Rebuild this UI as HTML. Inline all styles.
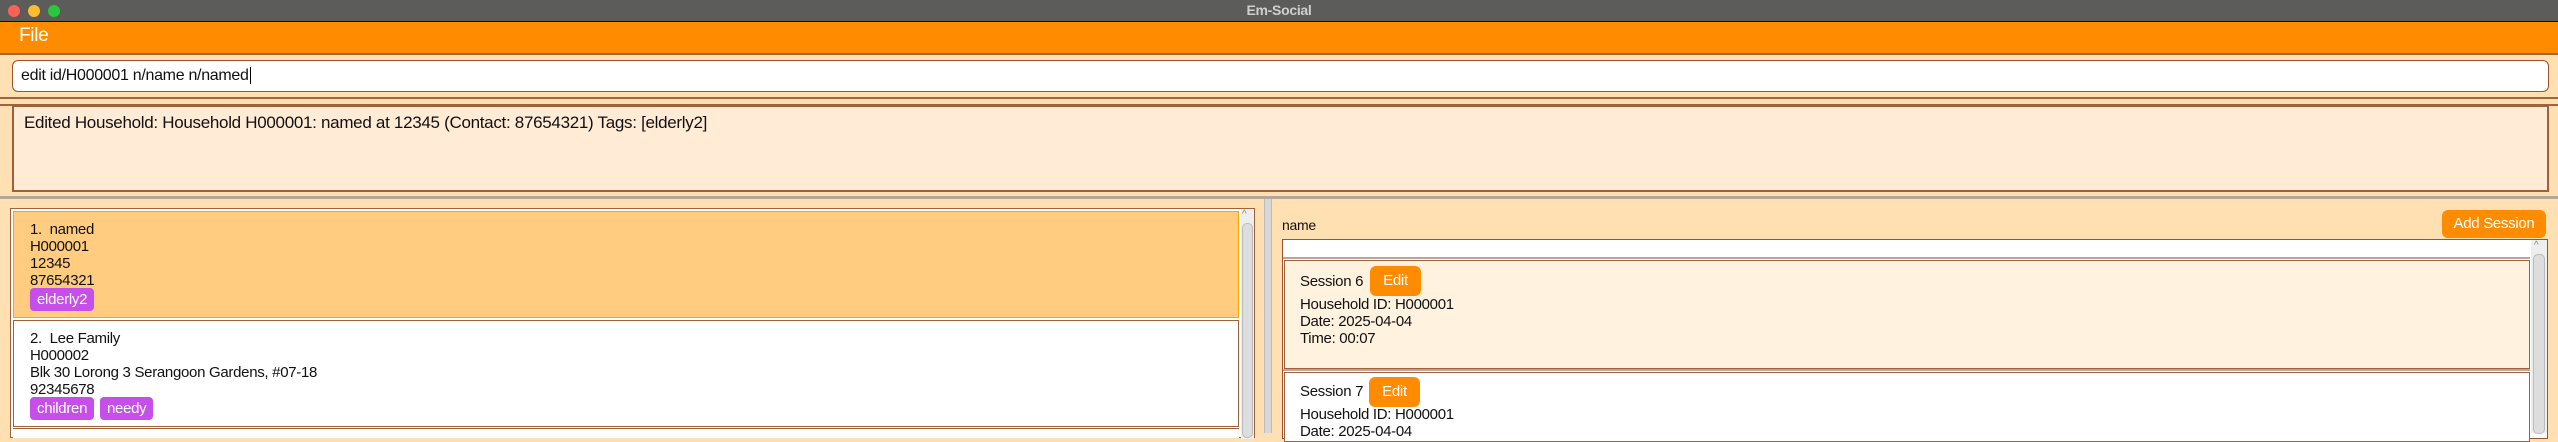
<!DOCTYPE html>
<html><head><meta charset="utf-8"><style>
*{margin:0;padding:0;box-sizing:border-box}
body{width:2558px;height:433px;overflow:hidden;background:#ffe0b2;font-family:"Liberation Sans",sans-serif;position:relative;color:#111;letter-spacing:-0.3px}
.a{position:absolute}
.t{position:absolute;font-size:15px;white-space:nowrap;line-height:17px}
.tag{position:absolute;background:#c54fe8;color:#fff;font-size:15px;border-radius:4px;height:23px;line-height:23px;padding:0 7px}
.btn{position:absolute;background:#ff8c00;color:#fff;font-size:15px;border-radius:6px;text-align:center}
</style></head><body>
<div class="a" style="left:0;top:0;width:2558px;height:22px;background:#5c5c5a;border-bottom:1px solid #111"></div>
<div class="a" style="left:8px;top:5px;width:12px;height:12px;border-radius:50%;background:#fe5f57"></div>
<div class="a" style="left:28px;top:5px;width:12px;height:12px;border-radius:50%;background:#febc2e"></div>
<div class="a" style="left:48px;top:5px;width:12px;height:12px;border-radius:50%;background:#28c840"></div>
<div class="a" style="left:0;top:2px;width:2558px;text-align:center;color:#cfcfcf;font-weight:bold;font-size:14px">Em-Social</div>
<div class="a" style="left:0;top:22px;width:2558px;height:31px;background:#ff8c00"></div>
<div class="a" style="left:19px;top:25px;color:#fff;font-size:19px">File</div>
<div class="a" style="left:0;top:53px;width:2558px;height:2px;background:#a0653d"></div>
<div class="a" style="left:12px;top:60px;width:2537px;height:32px;background:#fff;border:1px solid #a0522d;border-radius:6px"></div>
<div class="a" style="left:21px;top:67px;font-size:16px">edit id/H000001 n/name n/named<span style="border-left:1px solid #000;margin-left:1px"></span></div>
<div class="a" style="left:0;top:97px;width:2558px;height:2px;background:#a0653d"></div>
<div class="a" style="left:0;top:104px;width:2558px;height:2px;background:#a0653d"></div>
<div class="a" style="left:12px;top:105px;width:2537px;height:87px;background:#ffebd6;border:2px solid #a0603a"></div>
<div class="a" style="left:24px;top:113px;font-size:17px">Edited Household: Household H000001: named at 12345 (Contact: 87654321) Tags: [elderly2]</div>
<div class="a" style="left:0;top:196px;width:2558px;height:3px;background:#b5a89a"></div>
<div class="a" style="left:10px;top:208px;width:1245px;height:230px;border:1px solid #a0603a;background:#fff"></div>
<div class="a" style="left:13px;top:211px;width:1226px;height:107px;background:#ffcc80;border:1px solid #ffa500"></div>
<div class="t" style="left:30px;top:221px">1.&nbsp; named</div>
<div class="t" style="left:30px;top:238px">H000001</div>
<div class="t" style="left:30px;top:255px">12345</div>
<div class="t" style="left:30px;top:272px">87654321</div>
<div class="tag" style="left:30px;top:288px">elderly2</div>
<div class="a" style="left:13px;top:320px;width:1226px;height:107px;background:#fff;border:1px solid #a0603a"></div>
<div class="t" style="left:30px;top:330px">2.&nbsp; Lee Family</div>
<div class="t" style="left:30px;top:347px">H000002</div>
<div class="t" style="left:30px;top:364px">Blk 30 Lorong 3 Serangoon Gardens, #07-18</div>
<div class="t" style="left:30px;top:381px">92345678</div>
<div class="tag" style="left:30px;top:397px">children</div>
<div class="tag" style="left:100px;top:397px">needy</div>
<div class="a" style="left:13px;top:428px;width:1226px;height:10px;border-top:1px solid #a0603a;background:#fff"></div>
<div class="a" style="left:1241px;top:209px;width:13px;height:230px;background:#eee"></div>
<div class="a" style="left:1242px;top:223px;width:11px;height:215px;background:#ddd;border-radius:5px;border:1px solid #bbb"></div>
<div class="a" style="left:1242px;top:209px;font-size:10px;color:#888">^</div>
<div class="a" style="left:1264px;top:199px;width:8px;height:234px;background:#d8d8d8;border-left:1px solid #bbb;border-right:1px solid #bbb"></div>
<div class="t" style="left:1282px;top:217px;font-size:14px">name</div>
<div class="btn" style="left:2442px;top:210px;width:104px;height:28px;line-height:28px">Add Session</div>
<div class="a" style="left:1282px;top:239px;width:1266px;height:200px;border:1px solid #a0522d;background:#fff"></div>
<div class="a" style="left:1283px;top:257px;width:1247px;height:2px;background:#b5a89a"></div>
<div class="a" style="left:1284px;top:260px;width:1246px;height:109px;background:#fff3e0;border:1px solid #a0603a"></div>
<div class="t" style="left:1300px;top:273px">Session 6</div>
<div class="btn" style="left:1370px;top:266px;width:51px;height:30px;line-height:30px">Edit</div>
<div class="t" style="left:1300px;top:296px">Household ID: H000001</div>
<div class="t" style="left:1300px;top:313px">Date: 2025-04-04</div>
<div class="t" style="left:1300px;top:330px">Time: 00:07</div>
<div class="a" style="left:1283px;top:369px;width:1247px;height:2px;background:#b5a89a"></div>
<div class="a" style="left:1284px;top:372px;width:1246px;height:70px;background:#fff;border:1px solid #a0603a"></div>
<div class="t" style="left:1300px;top:383px">Session 7</div>
<div class="btn" style="left:1369px;top:377px;width:51px;height:30px;line-height:30px">Edit</div>
<div class="t" style="left:1300px;top:406px">Household ID: H000001</div>
<div class="t" style="left:1300px;top:423px">Date: 2025-04-04</div>
<div class="a" style="left:2531px;top:240px;width:16px;height:193px;background:#eee"></div>
<div class="a" style="left:2533px;top:254px;width:12px;height:180px;background:#ddd;border-radius:5px;border:1px solid #bbb"></div>
<div class="a" style="left:2534px;top:240px;font-size:10px;color:#888">^</div>
</body></html>
